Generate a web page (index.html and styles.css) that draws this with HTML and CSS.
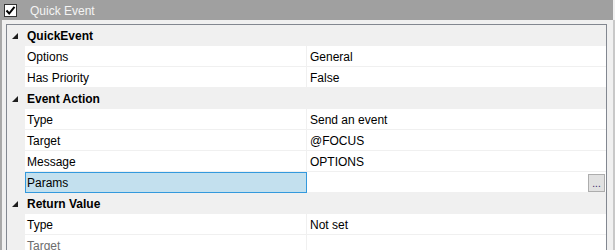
FILE: index.html
```html
<!DOCTYPE html>
<html lang="en">
<head>
  <meta charset="UTF-8">
  <title>Quick Event</title>
  <link rel="stylesheet" href="styles.css">
</head>
<body>
  <!-- Barra del titolo con checkbox -->
  <div class="header">
    <span class="check">
      <svg width="11" height="11" viewBox="0 0 11 11"><path d="M1.5 5.5 L4.2 8.5 L9.5 1.8" fill="none" stroke="#000" stroke-width="2"/></svg>
    </span>
    <span class="title">Quick Event</span>
  </div>

  <div class="body">
    <div class="grid">
      <div class="cat"><span class="tri"></span><span class="cat-name">QuickEvent</span></div>
      <div class="row"><div class="name">Options</div><div class="value">General</div></div>
      <div class="row"><div class="name">Has Priority</div><div class="value">False</div></div>

      <div class="cat"><span class="tri"></span><span class="cat-name">Event Action</span></div>
      <div class="row"><div class="name">Type</div><div class="value">Send an event</div></div>
      <div class="row"><div class="name">Target</div><div class="value">@FOCUS</div></div>
      <div class="row"><div class="name">Message</div><div class="value">OPTIONS</div></div>
      <div class="row"><div class="name selected">Params</div><div class="value"><span class="dots">...</span></div></div>

      <div class="cat"><span class="tri"></span><span class="cat-name">Return Value</span></div>
      <div class="row"><div class="name">Type</div><div class="value">Not set</div></div>
      <div class="row"><div class="name disabled">Target</div><div class="value"></div></div>
    </div>
  </div>
</body>
</html>
```

FILE: styles.css
```css
/* Stili globali */
* { margin: 0; padding: 0; box-sizing: border-box; }
html, body { height: 100%; }
body {
  background: #f0f0f0;
  font-family: "Liberation Sans", Arial, sans-serif;
  font-size: 12px;
  color: #000;
  overflow: hidden;
}

/* Barra del titolo */
.header {
  width: 613px;
  height: 20px;
  background: #a0a0a0;
  display: flex;
  align-items: center;
  padding-left: 4px;
}
.check {
  width: 13px;
  height: 13px;
  background: #fff;
  border: 1px solid #333;
  display: flex;
  align-items: center;
  justify-content: center;
}
.title {
  color: #f4f4f4;
  margin-left: 13px;
  font-size: 12px;
  padding-top: 1px;
}

/* Contenitore della griglia */
.body {
  height: 230px;
  padding: 4px 8px 0 6px;
  border-left: 2px solid #a8a8a8;
  border-right: 2px solid #c8c8c8;
}
.grid {
  width: 601px;
  margin-left: -2px;
  border: 1px solid #828790;
  border-bottom: none;
  background: #fff;
  height: 226px;
  overflow: hidden;
}

/* Righe delle categorie */
.cat {
  height: 21px;
  background: #f0f0f0;
  display: flex;
  align-items: center;
  font-weight: bold;
  padding-top: 1px;
}
.tri {
  width: 0;
  height: 0;
  margin-left: 5px;
  border-left: 6px solid transparent;
  border-bottom: 6px solid #1e1e1e;
}
.cat-name {
  margin-left: 9px;
}

/* Righe delle proprieta */
.row {
  height: 21px;
  display: flex;
  border-left: 18px solid #f0f0f0;
}
.name, .value {
  border-bottom: 1px solid #f0f0f0;
  display: flex;
  align-items: center;
  padding-top: 1px;
}
.name {
  width: 282px;
  padding-left: 2px;
  border-right: 1px solid #f0f0f0;
}
.value {
  flex: 1;
  padding-left: 3px;
  justify-content: space-between;
}
.selected {
  background: #c3e0ee;
  border: 1px solid #3399dd;
  padding-left: 1px;
}
.disabled {
  color: #6d6d6d;
}
.dots {
  margin-left: auto;
  margin-right: 1px;
  width: 17px;
  height: 18px;
  background: #e1e1e1;
  border: 1px solid #adadad;
  font-size: 10px;
  text-align: center;
  line-height: 18px;
  color: #302060;
}
```
